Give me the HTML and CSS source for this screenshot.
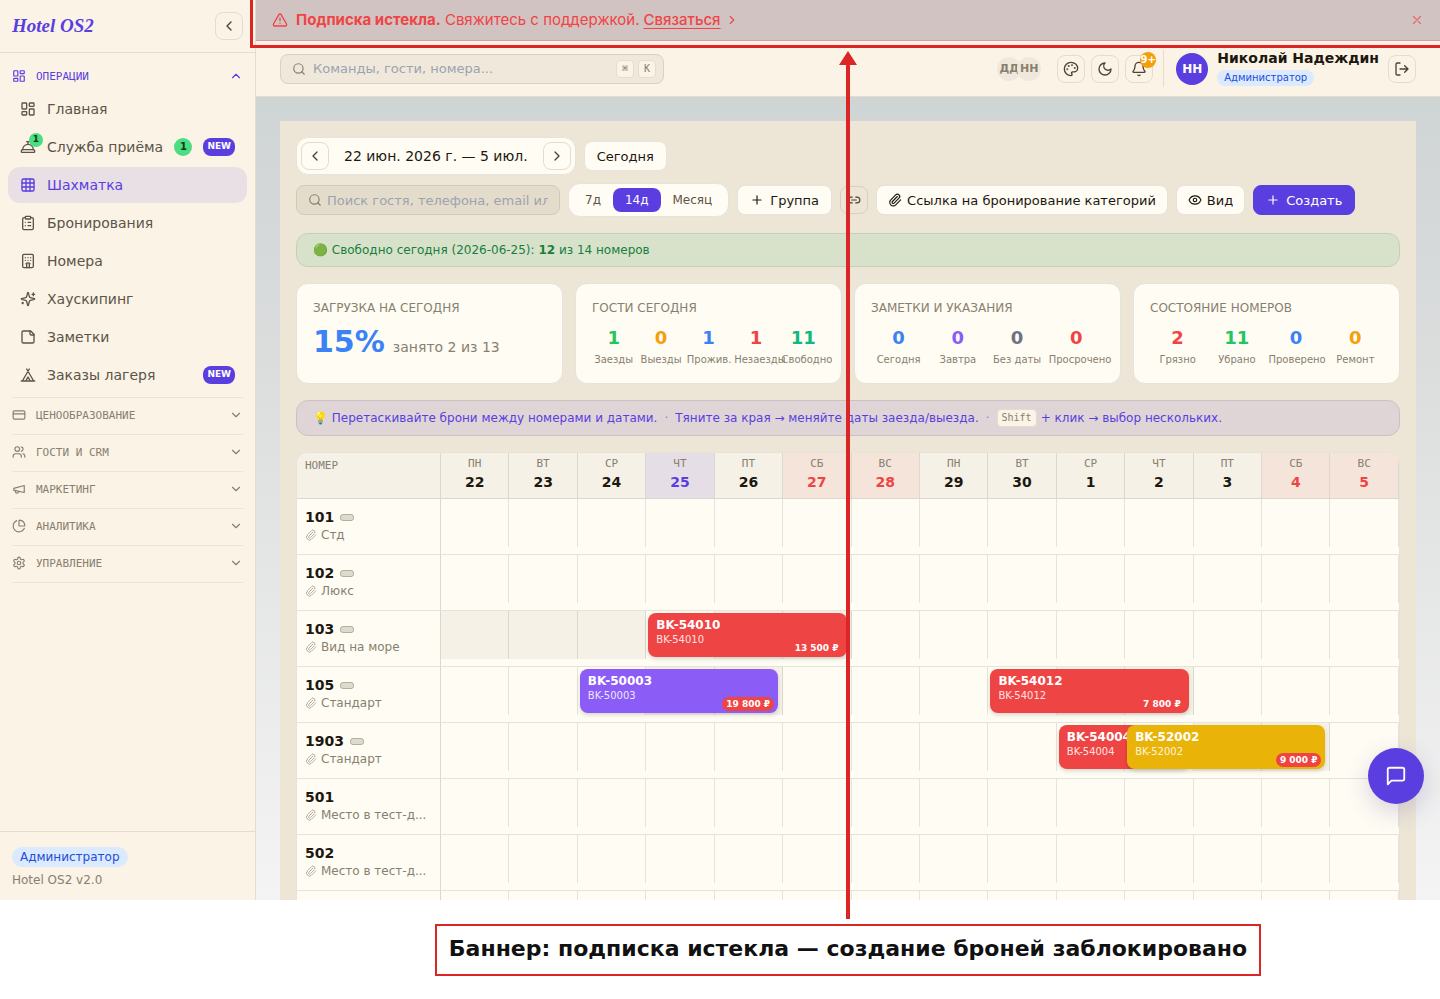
FILE: index.html
```html
<!DOCTYPE html>
<html lang="ru">
<head>
    <meta charset="UTF-8">
    <meta name="viewport" content="width=device-width, initial-scale=1.0">
    <title>Hotel OS2</title>
    <link rel="stylesheet" href="styles.css">
</head>
<body>
    <svg class="sprite" aria-hidden="true">
        <symbol id="i-dashboard" viewBox="0 0 24 24"><rect x="3" y="3" width="7" height="9" rx="1"/><rect x="14" y="3" width="7" height="5" rx="1"/><rect x="14" y="12" width="7" height="9" rx="1"/><rect x="3" y="16" width="7" height="5" rx="1"/></symbol>
        <symbol id="i-concierge" viewBox="0 0 24 24"><path d="M3 20a1 1 0 0 1-1-1v-1a2 2 0 0 1 2-2h16a2 2 0 0 1 2 2v1a1 1 0 0 1-1 1Z"/><path d="M20 16a8 8 0 1 0-16 0"/><path d="M12 4v4"/><path d="M10 4h4"/></symbol>
        <symbol id="i-grid" viewBox="0 0 24 24"><rect x="3" y="3" width="18" height="18" rx="2"/><path d="M3 9h18M3 15h18M9 3v18M15 3v18"/></symbol>
        <symbol id="i-clipboard" viewBox="0 0 24 24"><rect x="8" y="2" width="8" height="4" rx="1"/><path d="M16 4h2a2 2 0 0 1 2 2v14a2 2 0 0 1-2 2H6a2 2 0 0 1-2-2V6a2 2 0 0 1 2-2h2"/><path d="M12 11h4M12 16h4M8 11h.01M8 16h.01"/></symbol>
        <symbol id="i-hotel" viewBox="0 0 24 24"><rect x="4" y="2" width="16" height="20" rx="2"/><path d="M10 22v-6.57M14 15.43V22M15 16a5 5 0 0 0-6 0"/><path d="M8 7h.01M12 7h.01M16 7h.01M8 11h.01M12 11h.01M16 11h.01"/></symbol>
        <symbol id="i-sparkles" viewBox="0 0 24 24"><path d="M9.937 15.5A2 2 0 0 0 8.5 14.063l-6.135-1.582a.5.5 0 0 1 0-.962L8.5 9.936A2 2 0 0 0 9.937 8.5l1.582-6.135a.5.5 0 0 1 .963 0L14.063 8.5A2 2 0 0 0 15.5 9.937l6.135 1.581a.5.5 0 0 1 0 .964L15.5 14.063a2 2 0 0 0-1.437 1.437l-1.582 6.135a.5.5 0 0 1-.963 0z"/><path d="M20 3v4M22 5h-4M4 17v2M5 18H3"/></symbol>
        <symbol id="i-note" viewBox="0 0 24 24"><path d="M16 3H5a2 2 0 0 0-2 2v14a2 2 0 0 0 2 2h14a2 2 0 0 0 2-2V8Z"/><path d="M15 3v4a2 2 0 0 0 2 2h4"/></symbol>
        <symbol id="i-tent" viewBox="0 0 24 24"><path d="M3.5 21 14 3M20.5 21 10 3M15.5 21 12 15l-3.5 6M2 21h20"/></symbol>
        <symbol id="i-card" viewBox="0 0 24 24"><rect x="2" y="5" width="20" height="14" rx="2"/><path d="M2 10h20"/></symbol>
        <symbol id="i-users" viewBox="0 0 24 24"><path d="M16 21v-2a4 4 0 0 0-4-4H6a4 4 0 0 0-4 4v2"/><circle cx="9" cy="7" r="4"/><path d="M22 21v-2a4 4 0 0 0-3-3.87M16 3.13a4 4 0 0 1 0 7.75"/></symbol>
        <symbol id="i-megaphone" viewBox="0 0 24 24"><path d="m3 11 18-5v12L3 14v-3z"/><path d="M11.6 16.8a3 3 0 1 1-5.8-1.6"/></symbol>
        <symbol id="i-pie" viewBox="0 0 24 24"><path d="M21 12c.552 0 1.005-.449.95-.998a10 10 0 0 0-8.953-8.951c-.55-.055-.998.398-.998.95v8a1 1 0 0 0 1 1z"/><path d="M21.21 15.89A10 10 0 1 1 8 2.83"/></symbol>
        <symbol id="i-gear" viewBox="0 0 24 24"><path d="M12.22 2h-.44a2 2 0 0 0-2 2v.18a2 2 0 0 1-1 1.73l-.43.25a2 2 0 0 1-2 0l-.15-.08a2 2 0 0 0-2.73.73l-.22.38a2 2 0 0 0 .73 2.73l.15.1a2 2 0 0 1 1 1.72v.51a2 2 0 0 1-1 1.74l-.15.09a2 2 0 0 0-.73 2.73l.22.38a2 2 0 0 0 2.73.73l.15-.08a2 2 0 0 1 2 0l.43.25a2 2 0 0 1 1 1.73V20a2 2 0 0 0 2 2h.44a2 2 0 0 0 2-2v-.18a2 2 0 0 1 1-1.73l.43-.25a2 2 0 0 1 2 0l.15.08a2 2 0 0 0 2.73-.73l.22-.39a2 2 0 0 0-.73-2.73l-.15-.08a2 2 0 0 1-1-1.74v-.5a2 2 0 0 1 1-1.74l.15-.09a2 2 0 0 0 .73-2.73l-.22-.38a2 2 0 0 0-2.73-.73l-.15.08a2 2 0 0 1-2 0l-.43-.25a2 2 0 0 1-1-1.73V4a2 2 0 0 0-2-2z"/><circle cx="12" cy="12" r="3"/></symbol>
        <symbol id="i-alert" viewBox="0 0 24 24"><path d="m21.73 18-8-14a2 2 0 0 0-3.48 0l-8 14A2 2 0 0 0 4 21h16a2 2 0 0 0 1.73-3"/><path d="M12 9v4M12 17h.01"/></symbol>
        <symbol id="i-search" viewBox="0 0 24 24"><circle cx="11" cy="11" r="8"/><path d="m21 21-4.3-4.3"/></symbol>
        <symbol id="i-palette" viewBox="0 0 24 24"><circle cx="13.5" cy="6.5" r=".5"/><circle cx="17.5" cy="10.5" r=".5"/><circle cx="8.5" cy="7.5" r=".5"/><circle cx="6.5" cy="12.5" r=".5"/><path d="M12 2C6.5 2 2 6.5 2 12s4.5 10 10 10c.926 0 1.648-.746 1.648-1.688 0-.437-.18-.835-.437-1.125-.29-.289-.438-.652-.438-1.125a1.64 1.64 0 0 1 1.668-1.668h1.996c3.051 0 5.555-2.503 5.555-5.554C21.965 6.012 17.461 2 12 2z"/></symbol>
        <symbol id="i-moon" viewBox="0 0 24 24"><path d="M12 3a6 6 0 0 0 9 9 9 9 0 1 1-9-9Z"/></symbol>
        <symbol id="i-bell" viewBox="0 0 24 24"><path d="M10.268 21a2 2 0 0 0 3.464 0"/><path d="M3.262 15.326A1 1 0 0 0 4 17h16a1 1 0 0 0 .74-1.673C19.41 13.956 18 12.499 18 8A6 6 0 0 0 6 8c0 4.499-1.411 5.956-2.738 7.326"/></symbol>
        <symbol id="i-logout" viewBox="0 0 24 24"><path d="M9 21H5a2 2 0 0 1-2-2V5a2 2 0 0 1 2-2h4"/><path d="m16 17 5-5-5-5M21 12H9"/></symbol>
        <symbol id="i-link" viewBox="0 0 24 24"><path d="M9 17H7A5 5 0 0 1 7 7h2M15 7h2a5 5 0 1 1 0 10h-2M8 12h8"/></symbol>
        <symbol id="i-clip" viewBox="0 0 24 24"><path d="m16 6-8.414 8.586a2 2 0 0 0 2.829 2.829l8.414-8.586a4 4 0 1 0-5.657-5.657l-8.379 8.551a6 6 0 1 0 8.485 8.485l8.379-8.551"/></symbol>
        <symbol id="i-eye" viewBox="0 0 24 24"><path d="M2.062 12.348a1 1 0 0 1 0-.696 10.75 10.75 0 0 1 19.876 0 1 1 0 0 1 0 .696 10.75 10.75 0 0 1-19.876 0"/><circle cx="12" cy="12" r="3"/></symbol>
        <symbol id="i-chat" viewBox="0 0 24 24"><path d="M21 15a2 2 0 0 1-2 2H7l-4 4V5a2 2 0 0 1 2-2h14a2 2 0 0 1 2 2z"/></symbol>
        <symbol id="i-plus" viewBox="0 0 24 24"><path d="M5 12h14M12 5v14"/></symbol>
        <symbol id="i-x" viewBox="0 0 24 24"><path d="M18 6 6 18M6 6l12 12"/></symbol>
        <symbol id="i-left" viewBox="0 0 24 24"><path d="m15 18-6-6 6-6"/></symbol>
        <symbol id="i-right" viewBox="0 0 24 24"><path d="m9 18 6-6-6-6"/></symbol>
        <symbol id="i-down" viewBox="0 0 24 24"><path d="m6 9 6 6 6-6"/></symbol>
        <symbol id="i-up" viewBox="0 0 24 24"><path d="m18 15-6-6-6 6"/></symbol>
    </svg>

    <div class="app">
        <aside class="sidebar">
            <div class="sidebar-head">
                <a class="logo" href="#">Hotel OS2</a>
                <button class="icon-btn" aria-label="Свернуть меню"><svg class="icon"><use href="#i-left"/></svg></button>
            </div>
            <nav class="nav">
                <div class="nav-group">
                    <button class="nav-title open"><svg class="icon"><use href="#i-dashboard"/></svg>ОПЕРАЦИИ<svg class="icon arrow"><use href="#i-up"/></svg></button>
                    <div class="nav-list">
                        <a class="nav-item" href="#"><svg class="icon"><use href="#i-dashboard"/></svg>Главная</a>
                        <a class="nav-item" href="#"><svg class="icon"><use href="#i-concierge"/></svg><span class="dot">1</span>Служба приёма<span class="count">1</span><span class="new">NEW</span></a>
                        <a class="nav-item active" href="#"><svg class="icon"><use href="#i-grid"/></svg>Шахматка</a>
                        <a class="nav-item" href="#"><svg class="icon"><use href="#i-clipboard"/></svg>Бронирования</a>
                        <a class="nav-item" href="#"><svg class="icon"><use href="#i-hotel"/></svg>Номера</a>
                        <a class="nav-item" href="#"><svg class="icon"><use href="#i-sparkles"/></svg>Хаускипинг</a>
                        <a class="nav-item" href="#"><svg class="icon"><use href="#i-note"/></svg>Заметки</a>
                        <a class="nav-item" href="#"><svg class="icon"><use href="#i-tent"/></svg>Заказы лагеря<span class="new">NEW</span></a>
                    </div>
                </div>
                <div class="nav-group"><button class="nav-title"><svg class="icon"><use href="#i-card"/></svg>ЦЕНООБРАЗОВАНИЕ<svg class="icon arrow"><use href="#i-down"/></svg></button></div>
                <div class="nav-group"><button class="nav-title"><svg class="icon"><use href="#i-users"/></svg>ГОСТИ И CRM<svg class="icon arrow"><use href="#i-down"/></svg></button></div>
                <div class="nav-group"><button class="nav-title"><svg class="icon"><use href="#i-megaphone"/></svg>МАРКЕТИНГ<svg class="icon arrow"><use href="#i-down"/></svg></button></div>
                <div class="nav-group"><button class="nav-title"><svg class="icon"><use href="#i-pie"/></svg>АНАЛИТИКА<svg class="icon arrow"><use href="#i-down"/></svg></button></div>
                <div class="nav-group"><button class="nav-title"><svg class="icon"><use href="#i-gear"/></svg>УПРАВЛЕНИЕ<svg class="icon arrow"><use href="#i-down"/></svg></button></div>
            </nav>
            <div class="sidebar-foot">
                <span class="role">Администратор</span>
                <span class="version">Hotel OS2 v2.0</span>
            </div>
        </aside>

        <div class="main">
            <div class="banner">
                <svg class="icon"><use href="#i-alert"/></svg>
                <span><strong>Подписка истекла.</strong> Свяжитесь с поддержкой.</span>
                <a href="#">Связаться<svg class="icon"><use href="#i-right"/></svg></a>
                <button class="banner-close" aria-label="Закрыть"><svg class="icon"><use href="#i-x"/></svg></button>
            </div>

            <header class="topbar">
                <label class="search">
                    <svg class="icon"><use href="#i-search"/></svg>
                    <input type="text" placeholder="Команды, гости, номера..." aria-label="Поиск">
                    <kbd>⌘</kbd><kbd>K</kbd>
                </label>
                <div class="online"><span>ДД</span><span>НН</span></div>
                <div class="tools">
                    <button class="icon-btn" aria-label="Тема"><svg class="icon"><use href="#i-palette"/></svg></button>
                    <button class="icon-btn" aria-label="Тёмный режим"><svg class="icon"><use href="#i-moon"/></svg></button>
                    <button class="icon-btn" aria-label="Уведомления"><svg class="icon"><use href="#i-bell"/></svg><span class="bell-count">9+</span></button>
                </div>
                <div class="user">
                    <span class="avatar">НН</span>
                    <div class="user-info">
                        <span class="user-name">Николай Надеждин</span>
                        <span class="role role-small">Администратор</span>
                    </div>
                    <button class="icon-btn" aria-label="Выйти"><svg class="icon"><use href="#i-logout"/></svg></button>
                </div>
            </header>

            <main class="content">
                <div class="panel">
                    <div class="controls">
                        <div class="row">
                            <div class="period">
                                <button class="icon-btn" aria-label="Назад"><svg class="icon"><use href="#i-left"/></svg></button>
                                <span>22 июн. 2026 г. — 5 июл.</span>
                                <button class="icon-btn" aria-label="Вперёд"><svg class="icon"><use href="#i-right"/></svg></button>
                            </div>
                            <button class="btn">Сегодня</button>
                        </div>
                        <div class="row">
                            <label class="search guest-search">
                                <svg class="icon"><use href="#i-search"/></svg>
                                <input type="text" placeholder="Поиск гостя, телефона, email или" aria-label="Поиск гостя">
                            </label>
                            <div class="segmented">
                                <button>7д</button>
                                <button class="on">14д</button>
                                <button>Месяц</button>
                            </div>
                            <button class="btn"><svg class="icon"><use href="#i-plus"/></svg>Группа</button>
                            <button class="icon-btn" aria-label="Ссылка"><svg class="icon"><use href="#i-link"/></svg></button>
                            <button class="btn tight"><svg class="icon"><use href="#i-clip"/></svg>Ссылка на бронирование категорий</button>
                            <button class="btn tight"><svg class="icon"><use href="#i-eye"/></svg>Вид</button>
                            <button class="btn primary"><svg class="icon"><use href="#i-plus"/></svg>Создать</button>
                        </div>
                    </div>

                    <div class="notice free">🟢 Свободно сегодня (2026-06-25): <strong>12</strong> из 14 номеров</div>

                    <div class="stats">
                        <section class="card">
                            <h2>ЗАГРУЗКА НА СЕГОДНЯ</h2>
                            <div class="load"><strong>15%</strong><span>занято 2 из 13</span></div>
                        </section>
                        <section class="card">
                            <h2>ГОСТИ СЕГОДНЯ</h2>
                            <div class="figures five">
                                <div><b class="green">1</b><span>Заезды</span></div>
                                <div><b class="amber">0</b><span>Выезды</span></div>
                                <div><b class="blue">1</b><span>Прожив.</span></div>
                                <div><b class="red">1</b><span>Незаезды</span></div>
                                <div><b class="teal">11</b><span>Свободно</span></div>
                            </div>
                        </section>
                        <section class="card">
                            <h2>ЗАМЕТКИ И УКАЗАНИЯ</h2>
                            <div class="figures">
                                <div><b class="blue">0</b><span>Сегодня</span></div>
                                <div><b class="violet">0</b><span>Завтра</span></div>
                                <div><b class="gray">0</b><span>Без даты</span></div>
                                <div><b class="red">0</b><span>Просрочено</span></div>
                            </div>
                        </section>
                        <section class="card">
                            <h2>СОСТОЯНИЕ НОМЕРОВ</h2>
                            <div class="figures">
                                <div><b class="red">2</b><span>Грязно</span></div>
                                <div><b class="green">11</b><span>Убрано</span></div>
                                <div><b class="blue">0</b><span>Проверено</span></div>
                                <div><b class="amber">0</b><span>Ремонт</span></div>
                            </div>
                        </section>
                    </div>

                    <div class="notice hint">
                        <span>💡 Перетаскивайте брони между номерами и датами.</span>
                        <span class="sep">·</span>
                        <span>Тяните за края → меняйте даты заезда/выезда.</span>
                        <span class="sep">·</span>
                        <span class="keys"><kbd>Shift</kbd> + клик → выбор нескольких.</span>
                    </div>

                    <div class="board">
                        <table>
                            <thead>
                                <tr>
                                    <th class="room">НОМЕР</th>
                                    <th>ПН<b>22</b></th>
                                    <th>ВТ<b>23</b></th>
                                    <th>СР<b>24</b></th>
                                    <th class="today">ЧТ<b>25</b></th>
                                    <th>ПТ<b>26</b></th>
                                    <th class="weekend">СБ<b>27</b></th>
                                    <th class="weekend">ВС<b>28</b></th>
                                    <th>ПН<b>29</b></th>
                                    <th>ВТ<b>30</b></th>
                                    <th>СР<b>1</b></th>
                                    <th>ЧТ<b>2</b></th>
                                    <th>ПТ<b>3</b></th>
                                    <th class="weekend">СБ<b>4</b></th>
                                    <th class="weekend">ВС<b>5</b></th>
                                </tr>
                            </thead>
                            <tbody>
                                <tr>
                                    <td class="room"><div class="room-no">101<i class="bed"></i></div><div class="room-type"><svg class="icon"><use href="#i-clip"/></svg>Стд</div></td>
                                    <td></td><td></td><td></td><td></td><td></td><td></td><td></td><td></td><td></td><td></td><td></td><td></td><td></td><td></td>
                                </tr>
                                <tr>
                                    <td class="room"><div class="room-no">102<i class="bed"></i></div><div class="room-type"><svg class="icon"><use href="#i-clip"/></svg>Люкс</div></td>
                                    <td></td><td></td><td></td><td></td><td></td><td></td><td></td><td></td><td></td><td></td><td></td><td></td><td></td><td></td>
                                </tr>
                                <tr>
                                    <td class="room"><div class="room-no">103<i class="bed"></i></div><div class="room-type"><svg class="icon"><use href="#i-clip"/></svg>Вид на море</div></td>
                                    <td class="busy"></td><td class="busy"></td><td class="busy"></td>
                                    <td><a class="booking nights-3" href="#"><b>BK-54010</b><span>BK-54010</span><em>13 500 ₽</em></a></td>
                                    <td class="busy"></td><td class="busy"></td><td></td><td></td><td></td><td></td><td></td><td></td><td></td><td></td>
                                </tr>
                                <tr>
                                    <td class="room"><div class="room-no">105<i class="bed"></i></div><div class="room-type"><svg class="icon"><use href="#i-clip"/></svg>Стандарт</div></td>
                                    <td></td><td></td>
                                    <td><a class="booking violet-bg nights-3" href="#"><b>BK-50003</b><span>BK-50003</span><em>19 800 ₽</em></a></td>
                                    <td class="busy"></td><td class="busy"></td><td></td><td></td><td></td>
                                    <td><a class="booking nights-3" href="#"><b>BK-54012</b><span>BK-54012</span><em>7 800 ₽</em></a></td>
                                    <td class="busy"></td><td class="busy"></td><td></td><td></td><td></td>
                                </tr>
                                <tr>
                                    <td class="room"><div class="room-no">1903<i class="bed"></i></div><div class="room-type"><svg class="icon"><use href="#i-clip"/></svg>Стандарт</div></td>
                                    <td></td><td></td><td></td><td></td><td></td><td></td><td></td><td></td><td></td>
                                    <td><a class="booking nights-2" href="#"><b>BK-54004</b><span>BK-54004</span></a></td>
                                    <td><a class="booking yellow-bg nights-3" href="#"><b>BK-52002</b><span>BK-52002</span><em>9 000 ₽</em></a></td>
                                    <td class="busy"></td><td class="busy"></td><td></td>
                                </tr>
                                <tr>
                                    <td class="room"><div class="room-no">501</div><div class="room-type"><svg class="icon"><use href="#i-clip"/></svg>Место в тест-д...</div></td>
                                    <td></td><td></td><td></td><td></td><td></td><td></td><td></td><td></td><td></td><td></td><td></td><td></td><td></td><td></td>
                                </tr>
                                <tr>
                                    <td class="room"><div class="room-no">502</div><div class="room-type"><svg class="icon"><use href="#i-clip"/></svg>Место в тест-д...</div></td>
                                    <td></td><td></td><td></td><td></td><td></td><td></td><td></td><td></td><td></td><td></td><td></td><td></td><td></td><td></td>
                                </tr>
                                <tr>
                                    <td class="room"></td>
                                    <td></td><td></td><td></td><td></td><td></td><td></td><td></td><td></td><td></td><td></td><td></td><td></td><td></td><td></td>
                                </tr>
                            </tbody>
                        </table>
                    </div>
                </div>
            </main>
        </div>

        <button class="chat" aria-label="Чат"><svg class="icon"><use href="#i-chat"/></svg></button>
    </div>

    <div class="caption">
        <p>Баннер: подписка истекла — создание броней заблокировано</p>
    </div>

    <!-- callout: frame round the banner and the arrow up to it -->
    <div class="mark-frame"></div>
    <div class="mark-arrow"></div>
</body>
</html>
```

FILE: styles.css
```css
:root {
    --accent: #5a3ee0;
    --bg: #faf3e6;
    --card: #fffcf4;
    --line: #e3dccf;
    --cell: #e6e3da;
    --text: #1c1810;
    --text-2: #5c5446;
    --muted: #87806f;
    --mark: #dc2626;
    --mono: "DejaVu Sans Mono", monospace;
}
* {
    box-sizing: border-box;
}
body {
    margin: 0;
    height: 100vh;
    display: flex;
    flex-direction: column;
    position: relative;
    overflow: hidden;
    background: #fff;
    color: var(--text);
    font-family: "DejaVu Sans", sans-serif;
    font-size: 14px;
}
button, input {
    font: inherit;
    color: inherit;
}
button {
    padding: 0;
    border: none;
    background: none;
    cursor: pointer;
}
a {
    color: inherit;
    text-decoration: none;
}
.sprite {
    position: absolute;
    width: 0;
    height: 0;
}
.icon {
    width: 16px;
    height: 16px;
    flex: none;
    fill: none;
    stroke: currentColor;
    stroke-width: 2;
    stroke-linecap: round;
    stroke-linejoin: round;
}
.app {
    flex: 1;
    min-height: 0;
    display: flex;
    position: relative;
    overflow: hidden;
}
.icon-btn {
    width: 28px;
    height: 28px;
    flex: none;
    display: flex;
    align-items: center;
    justify-content: center;
    position: relative;
    border: 1px solid var(--line);
    border-radius: 8px;
    color: #4a4336;
}

/* sidebar */
.sidebar {
    width: 256px;
    flex: none;
    display: flex;
    flex-direction: column;
    background: var(--bg);
    border-right: 1px solid var(--line);
}
.sidebar-head {
    height: 53px;
    padding: 0 12px;
    display: flex;
    align-items: center;
    justify-content: space-between;
    border-bottom: 1px solid var(--line);
}
.logo {
    font-family: "Liberation Serif", serif;
    font-size: 19px;
    font-weight: bold;
    font-style: italic;
    color: var(--accent);
}
.nav {
    flex: 1;
    padding: 6px 12px;
}
.nav-group {
    padding: 2px 0 4px;
    border-bottom: 1px solid #ebe4d8;
}
.nav-title {
    width: 100%;
    height: 30px;
    display: flex;
    align-items: center;
    gap: 10px;
    font-family: var(--mono);
    font-size: 11px;
    color: var(--muted);
}
.nav-title.open {
    color: var(--accent);
}
.nav-title .icon {
    width: 14px;
    height: 14px;
}
.nav-title .arrow {
    margin-left: auto;
}
.nav-list {
    margin: 0 -4px;
    display: flex;
    flex-direction: column;
    gap: 2px;
}
.nav-item {
    height: 36px;
    padding: 0 12px;
    display: flex;
    align-items: center;
    gap: 11px;
    position: relative;
    border-radius: 12px;
    color: var(--text-2);
}
.nav-item.active {
    background: #e9e0e6;
    color: var(--accent);
}
.dot {
    position: absolute;
    left: 21px;
    top: 4px;
    width: 14px;
    height: 14px;
    border-radius: 50%;
    background: #4ade80;
    color: #14361f;
    font-size: 9px;
    font-weight: bold;
    line-height: 12px;
    text-align: center;
}
.count {
    width: 18px;
    height: 18px;
    margin-left: auto;
    border-radius: 50%;
    background: #4ade80;
    color: #14361f;
    font-size: 10px;
    font-weight: bold;
    line-height: 18px;
    text-align: center;
}
.new {
    height: 18px;
    padding: 0 4px;
    margin-left: auto;
    border-radius: 8px;
    background: var(--accent);
    color: #fff;
    font-size: 9px;
    font-weight: bold;
    line-height: 16px;
}
.count + .new {
    margin-left: 0;
}
.sidebar-foot {
    padding: 15px 12px 11px;
    display: flex;
    flex-direction: column;
    align-items: flex-start;
    gap: 4px;
    border-top: 1px solid var(--line);
    font-size: 12px;
    line-height: 18px;
    color: var(--muted);
}
.role {
    padding: 0 8px;
    border-radius: 10px;
    background: #dbeafe;
    color: #1d4ed8;
    font-size: 12px;
    line-height: 20px;
}

/* banner and top bar */
.main {
    flex: 1;
    min-width: 0;
    display: flex;
    flex-direction: column;
}
.banner {
    height: 41px;
    flex: none;
    padding: 0 16px;
    display: flex;
    align-items: center;
    gap: 8px;
    background: #d2c3c3;
    border-bottom: 1px solid #df9b9b;
    color: #ef4444;
    font-family: Inter, sans-serif;
    font-size: 15px;
    line-height: 20px;
}
.banner a {
    display: flex;
    align-items: center;
    gap: 4px;
    margin-left: -4px;
    font-weight: 500;
    text-decoration: underline;
    text-underline-offset: 3px;
}
.banner a .icon, .banner-close .icon {
    width: 14px;
    height: 14px;
}
.banner-close {
    display: flex;
    margin-left: auto;
    opacity: 0.7;
}
.topbar {
    height: 56px;
    flex: none;
    padding: 0 24px;
    display: flex;
    align-items: center;
    background: var(--bg);
    border-bottom: 1px solid var(--line);
}
.search {
    width: 384px;
    height: 30px;
    padding: 0 7px 0 11px;
    display: flex;
    align-items: center;
    gap: 4px;
    border: 1px solid #d9d1c4;
    border-radius: 8px;
    background: #f0e8db;
    color: var(--muted);
    font-size: 13px;
}
.search .icon {
    width: 14px;
    height: 14px;
}
.search input {
    flex: 1;
    min-width: 0;
    padding: 0 0 0 3px;
    border: none;
    outline: none;
    background: none;
}
.search input::placeholder {
    color: #9ca3af;
}
kbd {
    min-width: 18px;
    height: 18px;
    padding: 0 4px;
    display: inline-block;
    border: 1px solid var(--line);
    border-radius: 4px;
    background: var(--bg);
    color: var(--muted);
    font-family: var(--mono);
    font-size: 10px;
    line-height: 16px;
    text-align: center;
}
.online {
    display: flex;
    margin-left: auto;
}
.online span {
    width: 24px;
    height: 24px;
    border-radius: 50%;
    background: #f0e8dc;
    color: var(--muted);
    font-size: 11px;
    font-weight: bold;
    line-height: 24px;
    text-align: center;
}
.online span + span {
    margin-left: -4px;
}
.tools {
    display: flex;
    gap: 6px;
    margin-left: 16px;
}
.bell-count {
    position: absolute;
    top: -4px;
    right: -4px;
    width: 16px;
    height: 16px;
    border-radius: 50%;
    background: #f59e0b;
    color: #fff;
    font-size: 10px;
    font-weight: bold;
    line-height: 16px;
    text-align: center;
}
.user {
    height: 37px;
    margin-left: 10px;
    padding-left: 12px;
    display: flex;
    align-items: center;
    gap: 9px;
    border-left: 1px solid var(--line);
}
.avatar {
    width: 32px;
    height: 32px;
    border-radius: 50%;
    background: var(--accent);
    color: #fff;
    font-size: 12px;
    font-weight: bold;
    line-height: 32px;
    text-align: center;
}
.user-info {
    padding-bottom: 4px;
    display: flex;
    flex-direction: column;
    align-items: flex-start;
    gap: 2px;
}
.user-name {
    font-weight: bold;
    line-height: 20px;
}
.role-small {
    padding: 0 7px;
    font-size: 10px;
    line-height: 16px;
}

/* content */
.content {
    flex: 1;
    min-height: 0;
    padding: 24px 24px 0;
    overflow: hidden;
    background: linear-gradient(#cfd4d5, #dedfdf 40%, #f4f4f4);
}
.panel {
    padding: 16px;
    display: flex;
    flex-direction: column;
    gap: 16px;
    background: #ede6d6;
}
.controls {
    display: flex;
    flex-direction: column;
    gap: 8px;
}
.row {
    display: flex;
    align-items: center;
    gap: 8px;
}
.period {
    padding: 4px;
    display: flex;
    align-items: center;
    gap: 15px;
    border: 1px solid var(--cell);
    border-radius: 12px;
    background: var(--card);
}
.btn {
    height: 30px;
    padding: 0 12px;
    display: flex;
    align-items: center;
    gap: 6px;
    border: 1px solid var(--cell);
    border-radius: 8px;
    background: var(--card);
    font-size: 13px;
    white-space: nowrap;
}
.btn .icon, .row > .icon-btn .icon {
    width: 14px;
    height: 14px;
}
.row > .icon-btn {
    border-color: #d8cfbe;
}
.btn.tight {
    padding: 0 11px;
    gap: 5px;
}
.btn.primary {
    border-color: var(--accent);
    background: var(--accent);
    color: #fff;
}
.guest-search {
    width: 264px;
    padding: 0 11px;
    gap: 2px;
    background: #e4dccb;
    border-color: #d1c8b8;
}
.segmented {
    height: 34px;
    padding: 4px;
    display: flex;
    border: 1px solid var(--cell);
    border-radius: 12px;
    background: var(--card);
    color: var(--text-2);
    font-size: 12px;
}
.segmented button {
    padding: 0 12px;
    border-radius: 8px;
}
.segmented .on {
    background: var(--accent);
    color: #fff;
}
.notice {
    padding: 8px 16px;
    border: 1px solid;
    border-radius: 12px;
    font-size: 12px;
    line-height: 16px;
}
.free {
    background: #d8e2ca;
    border-color: #c3d0b7;
    color: #15803d;
}
.hint {
    display: flex;
    align-items: center;
    gap: 7px;
    background: #dfd5d6;
    border-color: #cbc0c4;
    color: var(--accent);
    line-height: 18px;
}
.keys {
    display: flex;
    gap: 4px;
}
.sep {
    opacity: 0.6;
}
.stats {
    display: grid;
    grid-template-columns: repeat(4, minmax(0, 1fr));
    gap: 12px;
}
.card {
    padding: 16px;
    border: 1px solid var(--cell);
    border-radius: 12px;
    background: var(--card);
}
.card h2 {
    margin: 0 0 8px;
    color: var(--muted);
    font-size: 12px;
    font-weight: normal;
    line-height: 16px;
}
.load {
    display: flex;
    align-items: baseline;
    gap: 8px;
    line-height: 36px;
    color: var(--muted);
}
.load strong {
    font-size: 30px;
    color: #3b82f6;
}
.figures {
    display: grid;
    grid-template-columns: repeat(4, minmax(0, 1fr));
    gap: 4px;
    text-align: center;
}
.figures.five {
    grid-template-columns: repeat(5, minmax(0, 1fr));
}
.figures b {
    display: block;
    font-size: 18px;
    line-height: 28px;
}
.figures span {
    display: block;
    color: var(--muted);
    font-size: 10px;
    line-height: 15px;
    white-space: nowrap;
}
.green { color: #22c55e; }
.amber { color: #f59e0b; }
.blue { color: #3b82f6; }
.red { color: #ef4444; }
.teal { color: #10b981; }
.violet { color: #8b5cf6; }
.gray { color: #6b7280; }

/* booking board */
.board {
    border: 1px solid var(--cell);
    border-radius: 12px;
    overflow: hidden;
    background: var(--card);
}
table {
    width: 100%;
    table-layout: fixed;
    border-collapse: separate;
    border-spacing: 0;
}
th {
    height: 46px;
    padding: 3px 0 0;
    vertical-align: top;
    border-right: 1px solid #dcd8cd;
    border-bottom: 1px solid #dcd8cd;
    background: #f5f1e7;
    color: var(--muted);
    font-family: var(--mono);
    font-size: 11px;
    font-weight: normal;
    line-height: 16px;
}
th b {
    display: block;
    color: var(--text);
    font-family: "DejaVu Sans", sans-serif;
    font-size: 14px;
    line-height: 20px;
}
th.today {
    background: #e5dee6;
}
th.today b {
    color: var(--accent);
}
th.weekend {
    background: #f5e4da;
}
th.weekend b {
    color: #ef4444;
}
th.room {
    width: 144px;
    padding: 5px 8px 0;
    text-align: left;
}
/* the day line and the shading stop 8px short of the row */
td {
    height: 56px;
    padding: 0;
    position: relative;
    vertical-align: top;
    border-bottom: 1px solid var(--cell);
    background: linear-gradient(var(--cell), var(--cell)) right top / 1px 48px no-repeat;
}
td.busy {
    background: linear-gradient(#dcd8cd, #dcd8cd) right top / 1px 48px no-repeat,
        linear-gradient(#f5f1e7, #f5f1e7) left top / 100% 48px no-repeat;
}
td.room {
    padding: 8px 8px 0;
    border-right: 1px solid #dcd8cd;
    background: none;
}
.room-no {
    display: flex;
    align-items: center;
    gap: 6px;
    font-weight: bold;
    line-height: 20px;
}
.bed {
    width: 14px;
    height: 7px;
    border: 1px solid #b3ae9f;
    border-radius: 3px;
    background: #dedacd;
}
.room-type {
    display: flex;
    align-items: center;
    gap: 4px;
    color: var(--muted);
    font-size: 12px;
    line-height: 16px;
    white-space: nowrap;
}
.room-type .icon {
    width: 12px;
    height: 12px;
    opacity: 0.6;
}
.booking {
    position: absolute;
    left: 2px;
    top: 2px;
    z-index: 1;
    height: 44px;
    padding: 4px 8px;
    border-radius: 8px;
    background: #ef4444;
    color: #fff;
    box-shadow: 0 2px 4px rgba(0, 0, 0, 0.15);
    white-space: nowrap;
}
.nights-2 {
    width: calc(200% - 7px);
}
.nights-3 {
    width: calc(300% - 7px);
}
.violet-bg {
    background: #8b5cf6;
}
.yellow-bg {
    background: #eab308;
}
.booking b {
    display: block;
    font-size: 12px;
    line-height: 16px;
}
.booking span {
    display: block;
    font-size: 10px;
    line-height: 14px;
    opacity: 0.85;
}
.booking em {
    position: absolute;
    right: 4px;
    bottom: 2px;
    padding: 0 4px;
    border-radius: 7px;
    background: #ef4444;
    font-size: 9px;
    font-style: normal;
    font-weight: bold;
    line-height: 14px;
}
.chat {
    position: absolute;
    right: 16px;
    bottom: 96px;
    z-index: 2;
    width: 56px;
    height: 56px;
    display: flex;
    align-items: center;
    justify-content: center;
    border-radius: 50%;
    background: var(--accent);
    color: #fff;
    box-shadow: 0 8px 24px rgba(60, 45, 130, 0.2);
}
.chat .icon {
    width: 22px;
    height: 22px;
}

/* caption and callout */
.caption {
    flex: none;
    padding: 24px 0 23px 256px;
    display: flex;
    justify-content: center;
}
.caption p {
    margin: 0;
    padding: 0 12px 2px;
    border: 2px solid var(--mark);
    color: #111;
    font-size: 22px;
    font-weight: bold;
    line-height: 46px;
}
.mark-frame {
    position: absolute;
    z-index: 3;
    left: 250px;
    right: 0;
    top: 0;
    height: 48px;
    border-left: 3px solid var(--mark);
    border-bottom: 3px solid var(--mark);
    pointer-events: none;
}
.mark-arrow {
    position: absolute;
    z-index: 3;
    left: calc(50% + 119px);
    top: 51px;
    bottom: 80px;
    width: 18px;
    background: var(--mark);
    clip-path: polygon(50% 0, 100% 14px, 11px 14px, 11px 100%, 7px 100%, 7px 14px, 0 14px);
    pointer-events: none;
}
```
